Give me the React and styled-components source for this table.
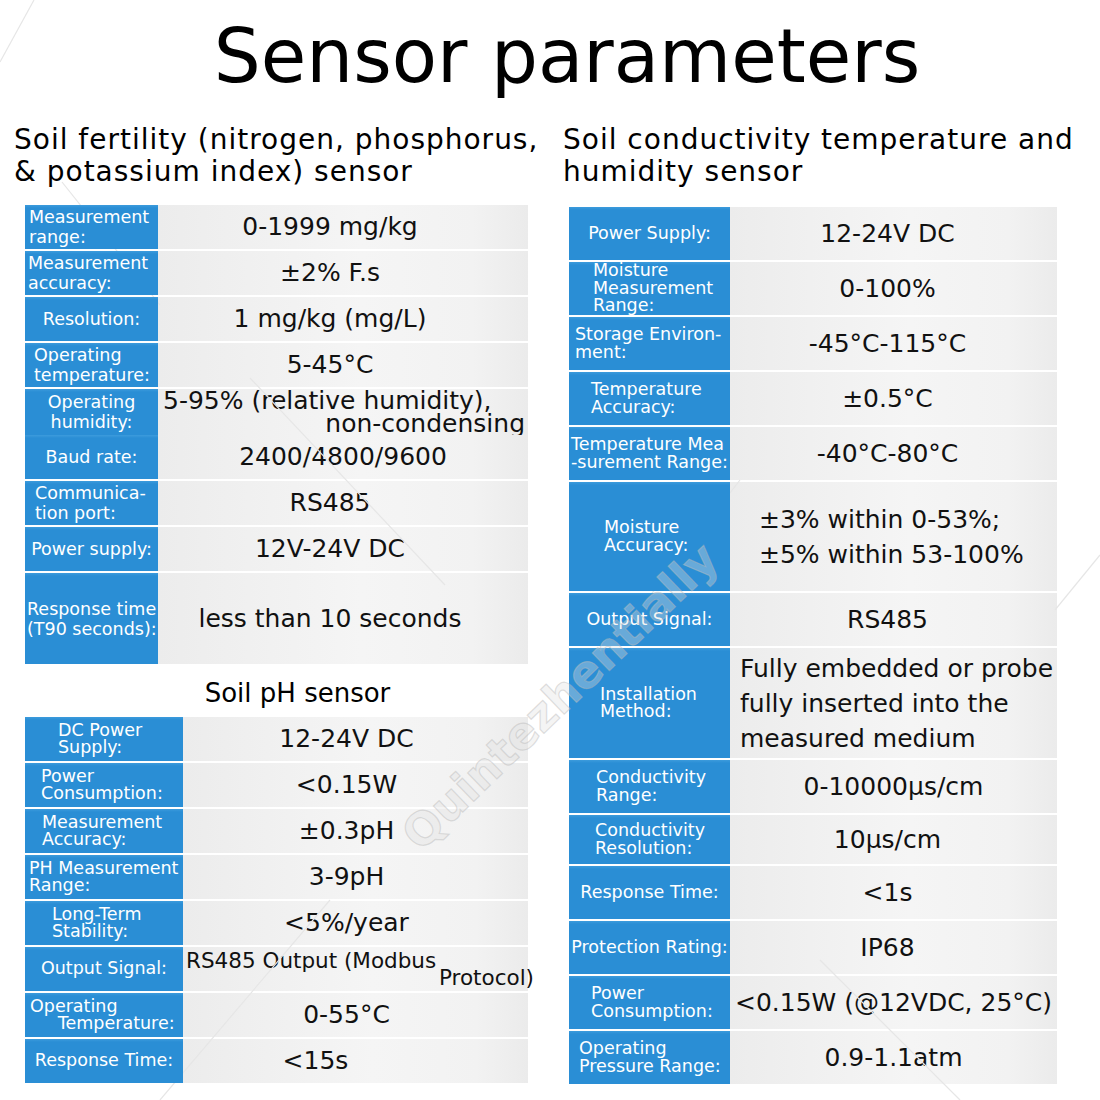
import styled, { createGlobalStyle } from 'styled-components';

const GlobalStyle = createGlobalStyle`
  html, body {
    margin: 0;
    padding: 0;
    background: #ffffff;
  }
  body {
    font-family: "DejaVu Sans", Verdana, sans-serif;
    color: #111;
  }
`;

const Page = styled.div`
  position: relative;
  width: 1100px;
  height: 1100px;
  overflow: hidden;
  background: #fff;
`;

const Title = styled.h1`
  margin: 0;
  padding: 19px 0 0 34px;
  text-align: center;
  font-size: 74px;
  line-height: 74px;
  font-weight: 400;
  color: #000;
`;

const Columns = styled.div`
  display: grid;
  grid-template-columns: 549px 551px;
  margin-top: 31px;
`;

const Column = styled.section`
  display: flex;
  flex-direction: column;
  padding-left: 14px;
`;

const Heading = styled.h2`
  margin: 0 0 ${(p) => p.$gap}px;
  font-size: 28px;
  line-height: 32px;
  letter-spacing: 1px;
  font-weight: 400;
  color: #000;
  white-space: nowrap;
`;

const SubHeading = styled.h3`
  margin: 14px 0 9px 11px;
  width: 503px;
  padding-left: 42px;
  box-sizing: border-box;
  text-align: center;
  font-size: 26px;
  line-height: 30px;
  font-weight: 400;
  color: #000;
`;

const Table = styled.div`
  display: flex;
  flex-direction: column;
  gap: 2px;
  width: ${(p) => p.$width}px;
  margin-left: ${(p) => p.$offset}px;
`;

const Row = styled.div`
  display: grid;
  grid-template-columns: ${(p) => p.$labelWidth}px 1fr;
  height: ${(p) => p.$height}px;
`;

const Label = styled.div`
  display: flex;
  flex-direction: column;
  justify-content: center;
  align-items: ${(p) => (p.$align === 'center' ? 'center' : 'flex-start')};
  padding-left: ${(p) => (p.$align === 'center' ? 0 : p.$pad)}px;
  background: linear-gradient(180deg, #3c9bdc 0px, #2a8ed5 3px, #2a8ed5 100%);
  color: #fff;
  font-size: 17.5px;
  line-height: ${(p) => p.$lh}px;
  position: relative;
  z-index: 1;
`;

const LabelLine = styled.span`
  white-space: pre;
`;

const Value = styled.div`
  display: flex;
  flex-direction: column;
  justify-content: center;
  align-items: ${(p) => (p.$block ? 'stretch' : 'center')};
  padding: 0 ${(p) => p.$padRight}px 0 ${(p) => p.$padLeft}px;
  background: linear-gradient(90deg, #ececec 0%, #f5f5f5 55%, #f2f2f2 85%, #ebebeb 100%);
  font-size: ${(p) => p.$size || 25}px;
  line-height: ${(p) => p.$lh || 30}px;
  color: #111;
`;

const ValueLine = styled.span`
  white-space: pre;
  text-align: ${(p) => p.$align || 'left'};
  margin-right: ${(p) => p.$shift || 0}px;
`;

const Overlay = styled.svg`
  position: absolute;
  inset: 0;
  pointer-events: none;
`;

const Watermark = styled.div`
  position: absolute;
  z-index: 2;
  left: 410px;
  top: 818px;
  transform: rotate(-44deg);
  transform-origin: left center;
  font-family: "DejaVu Sans", sans-serif;
  font-weight: 700;
  font-size: 45px;
  line-height: 48px;
  color: rgba(225, 225, 225, 0.35);
  -webkit-text-stroke: 1.2px rgba(185, 185, 185, 0.45);
  pointer-events: none;
  white-space: nowrap;
`;

const fertility = [
  { label: ['Measurement', 'range:'], pad: 4, value: '0-1999 mg/kg' },
  { label: ['Measurement', 'accuracy:'], pad: 3, value: '±2% F.s' },
  { label: ['Resolution:'], align: 'center', value: '1 mg/kg (mg/L)' },
  { label: ['Operating', 'temperature:'], pad: 9, value: '5-45°C' },
  {
    label: ['Operating', 'humidity:'],
    align: 'center',
    lines: [
      { t: '5-95% (relative humidity),', align: 'left' },
      { t: 'non-condensing', align: 'right' },
    ],
    padLeft: 5,
    padRight: 3,
    lh: 23,
  },
  { label: ['Baud rate:'], align: 'center', value: '2400/4800/9600', padRight: 0 },
  { label: ['Communica-', 'tion port:'], pad: 10, value: 'RS485' },
  { label: ['Power supply:'], align: 'center', value: '12V-24V DC' },
  { label: ['Response time', '(T90 seconds):'], pad: 2, value: 'less than 10 seconds', height: 91 },
];

const ph = [
  { label: ['DC Power', 'Supply:'], pad: 33, value: '12-24V DC' },
  { label: ['Power', 'Consumption:'], pad: 16, value: '<0.15W' },
  { label: ['Measurement', 'Accuracy:'], pad: 17, value: '±0.3pH' },
  { label: ['PH Measurement', 'Range:'], pad: 4, value: '3-9pH' },
  { label: ['Long-Term', 'Stability:'], pad: 27, value: '<5%/year' },
  {
    label: ['Output Signal:'],
    align: 'center',
    lines: [
      { t: 'RS485 Output (Modbus', align: 'left' },
      { t: 'Protocol)', align: 'right', shift: -6 },
    ],
    padLeft: 3,
    padRight: 0,
    size: 21.5,
    lh: 17,
  },
  { label: ['Operating', '     Temperature:'], pad: 5, value: '0-55°C' },
  { label: ['Response Time:'], align: 'center', value: '<15s', padRight: 80 },
];

const conductivity = [
  { label: ['Power Supply:'], align: 'center', value: '12-24V DC' },
  { label: ['Moisture', 'Measurement', 'Range:'], pad: 24, value: '0-100%' },
  { label: ['Storage Environ-', 'ment:'], pad: 6, value: '-45°C-115°C' },
  { label: ['Temperature', 'Accuracy:'], pad: 22, value: '±0.5°C' },
  { label: ['Temperature Mea', '-surement Range:'], pad: 2, value: '-40°C-80°C' },
  {
    label: ['Moisture', 'Accuracy:'],
    pad: 35,
    height: 109,
    lines: [
      { t: '±3% within 0-53%;' },
      { t: '±5% within 53-100%' },
    ],
    padLeft: 29,
    padRight: 0,
    lh: 35,
  },
  { label: ['Output Signal:'], align: 'center', value: 'RS485' },
  {
    label: ['Installation', 'Method:'],
    pad: 31,
    height: 110,
    lines: [
      { t: 'Fully embedded or probe' },
      { t: 'fully inserted into the' },
      { t: 'measured medium' },
    ],
    padLeft: 10,
    padRight: 0,
    lh: 35,
  },
  { label: ['Conductivity', 'Range:'], pad: 27, value: '0-10000μs/cm', padRight: 0 },
  { label: ['Conductivity', 'Resolution:'], pad: 26, value: '10μs/cm', height: 49 },
  { label: ['Response Time:'], align: 'center', value: '<1s' },
  { label: ['Protection Rating:'], align: 'center', value: 'IP68' },
  { label: ['Power', 'Consumption:'], pad: 22, value: '<0.15W (@12VDC, 25°C)', padRight: 0 },
  { label: ['Operating', 'Pressure Range:'], pad: 10, value: '0.9-1.1atm', padRight: 0 },
];

function SpecTable({ rows, width, offset, labelWidth, rowHeight, lh, padRight }) {
  return (
    <Table $width={width} $offset={offset}>
      {rows.map((r, i) => (
        <Row key={i} $labelWidth={labelWidth} $height={r.height || rowHeight}>
          <Label $align={r.align} $pad={r.pad || 0} $lh={lh}>
            {r.label.map((l, j) => (
              <LabelLine key={j}>{l}</LabelLine>
            ))}
          </Label>
          {r.lines ? (
            <Value
              $block
              $padLeft={r.padLeft}
              $padRight={r.padRight}
              $size={r.size}
              $lh={r.lh}
            >
              {r.lines.map((l, j) => (
                <ValueLine key={j} $align={l.align} $shift={l.shift}>
                  {l.t}
                </ValueLine>
              ))}
            </Value>
          ) : (
            <Value $padLeft={0} $padRight={r.padRight ?? padRight}>
              <ValueLine>{r.value}</ValueLine>
            </Value>
          )}
        </Row>
      ))}
    </Table>
  );
}

export default function App() {
  return (
    <Page>
      <GlobalStyle />
      <Overlay width="1100" height="1100" viewBox="0 0 1100 1100">
        <g stroke="#e6e6e6" strokeWidth="1.2" fill="none">
          <line x1="0" y1="62" x2="34" y2="0" />
          <line x1="62" y1="182" x2="160" y2="305" />
          <line x1="250" y1="378" x2="445" y2="585" />
          <line x1="160" y1="1100" x2="330" y2="900" />
          <line x1="740" y1="480" x2="600" y2="660" />
          <line x1="1100" y1="555" x2="1055" y2="610" />
          <line x1="820" y1="960" x2="960" y2="1100" />
        </g>
      </Overlay>
      <Title>Sensor parameters</Title>
      <Columns>
        <Column>
          <Heading $gap={17}>
            Soil fertility (nitrogen, phosphorus,
            <br />& potassium index) sensor
          </Heading>
          <SpecTable
            rows={fertility}
            width={503}
            offset={11}
            labelWidth={133}
            rowHeight={44}
            lh={20}
            padRight={26}
          />
          <SubHeading>Soil pH sensor</SubHeading>
          <SpecTable
            rows={ph}
            width={503}
            offset={11}
            labelWidth={158}
            rowHeight={44}
            lh={17.5}
            padRight={18}
          />
        </Column>
        <Column>
          <Heading $gap={19}>
            Soil conductivity temperature and
            <br />
            humidity sensor
          </Heading>
          <SpecTable
            rows={conductivity}
            width={488}
            offset={6}
            labelWidth={161}
            rowHeight={53}
            lh={17.5}
            padRight={12}
          />
        </Column>
      </Columns>
      <Watermark>Quintezhentially</Watermark>
    </Page>
  );
}
